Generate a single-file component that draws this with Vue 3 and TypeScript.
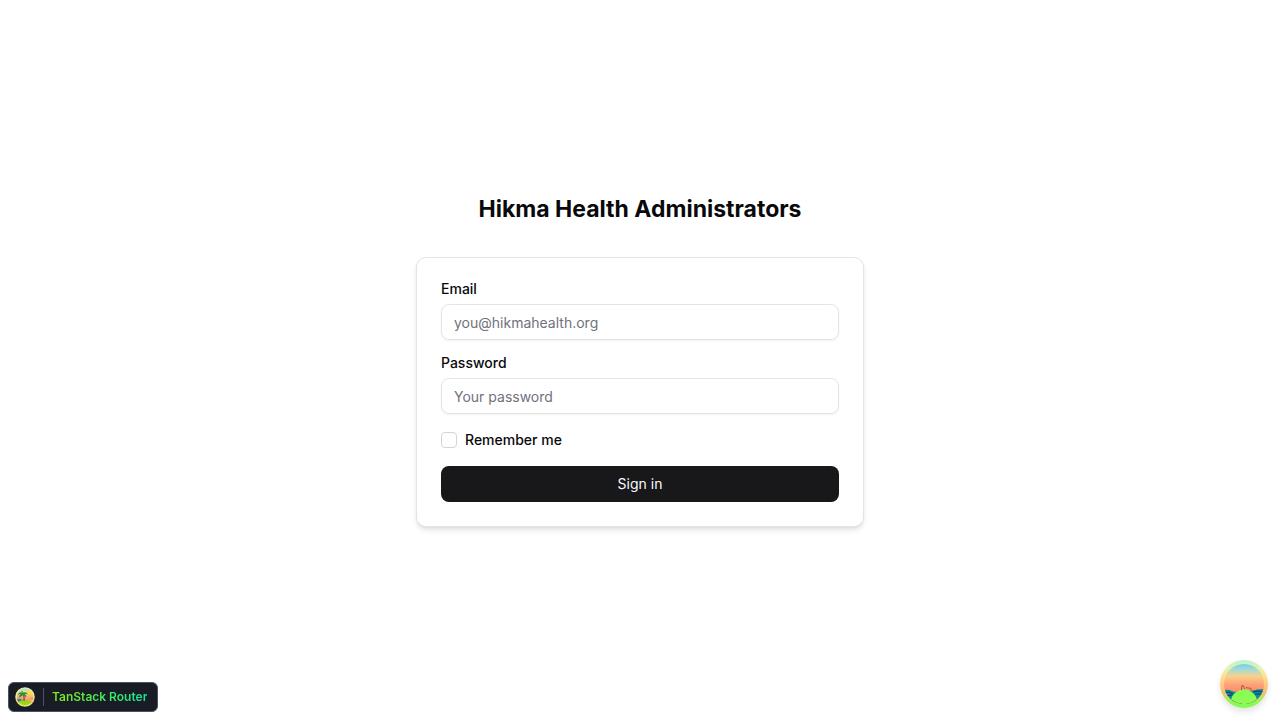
<script setup lang="ts">
import { ref } from 'vue'

const email = ref('')
const password = ref('')
const remember = ref(false)
</script>

<template>
  <main class="page">
    <div class="login">
      <h1>Hikma Health Administrators</h1>
      <form class="card" @submit.prevent>
        <div class="field">
          <label for="email">Email</label>
          <input id="email" v-model="email" type="email" placeholder="you@hikmahealth.org" />
        </div>
        <div class="field">
          <label for="password">Password</label>
          <input id="password" v-model="password" type="password" placeholder="Your password" />
        </div>
        <div class="remember">
          <input id="remember" v-model="remember" type="checkbox" />
          <label for="remember">Remember me</label>
        </div>
        <button class="submit" type="submit">Sign in</button>
      </form>
    </div>
  </main>

  <button class="router" type="button">
    <svg width="20" height="20" viewBox="0 0 40 40" aria-hidden="true">
      <defs>
        <linearGradient id="r-sky" x1="0" y1="0" x2="0" y2="1">
          <stop offset="0" stop-color="#8edbe0" />
          <stop offset=".25" stop-color="#f8d984" />
          <stop offset=".6" stop-color="#ff9c72" />
          <stop offset="1" stop-color="#f77e66" />
        </linearGradient>
        <linearGradient id="r-ring" x1="0" y1="0" x2="0" y2="1">
          <stop offset="0" stop-color="#c7f0c4" />
          <stop offset=".45" stop-color="#ffe99a" />
          <stop offset=".75" stop-color="#ffc37f" />
          <stop offset="1" stop-color="#d9ef72" />
        </linearGradient>
        <clipPath id="r-clip"><circle cx="20" cy="20" r="18" /></clipPath>
      </defs>
      <g clip-path="url(#r-clip)">
        <rect width="40" height="40" fill="url(#r-sky)" />
        <circle cx="29" cy="12" r="4" fill="#ffe323" />
        <path d="M0 25Q7 22 13 25T25 25T40 23V40H0Z" fill="#168b91" />
        <path d="M22 25Q31 21 40 25V30H24Z" fill="#f5a46d" />
        <ellipse cx="20" cy="35" rx="16" ry="9" fill="#9bd51a" />
        <path d="M15 14Q20 20 18 28" fill="none" stroke="#b85b38" stroke-width="3" />
        <path d="M16 12Q8 8 5 16Q8 14 11 15Q7 17 9 22Q13 18 16 16Q20 17 22 21Q24 17 20 14Q24 13 26 15Q24 9 17 11Q16 7 11 8Q14 9 16 12Z" fill="#259447" />
      </g>
      <circle cx="20" cy="20" r="18" fill="none" stroke="url(#r-ring)" stroke-width="3" />
    </svg>
    <span class="divider"></span>
    <span class="router-name">TanStack Router</span>
  </button>

  <button class="query" type="button" aria-label="Open query devtools">
    <svg width="48" height="48" viewBox="0 0 48 48" aria-hidden="true">
      <defs>
        <linearGradient id="q-sky" x1="0" y1="4" x2="0" y2="38" gradientUnits="userSpaceOnUse">
          <stop offset="0" stop-color="#70cfed" />
          <stop offset=".16" stop-color="#a3dbd3" />
          <stop offset=".36" stop-color="#f7d28a" />
          <stop offset=".62" stop-color="#ff9f76" />
          <stop offset="1" stop-color="#f97862" />
        </linearGradient>
        <linearGradient id="q-ring" x1="0" y1="0" x2="0" y2="1">
          <stop offset="0" stop-color="#b9f3cf" />
          <stop offset=".17" stop-color="#e4f2ae" />
          <stop offset=".35" stop-color="#ffe08c" />
          <stop offset=".56" stop-color="#ffc184" />
          <stop offset=".7" stop-color="#e8c670" />
          <stop offset=".84" stop-color="#a5ed61" />
          <stop offset="1" stop-color="#79ff50" />
        </linearGradient>
        <clipPath id="q-clip"><circle cx="24" cy="24" r="20" /></clipPath>
      </defs>
      <circle cx="24" cy="24" r="24" fill="url(#q-ring)" />
      <g clip-path="url(#q-clip)">
        <rect width="48" height="48" fill="url(#q-sky)" />
        <path d="M3 30Q8 29 12 31T19 31V42H3Z" fill="#078b9b" />
        <path d="M31 31Q37 29 45 29V42H31Z" fill="#078b9b" />
        <path d="M4 33L9 32L13 34M6 36L12 35M33 32L38 31L43 32M35 34L42 34" fill="none" stroke="#123c59" />
        <circle cx="24" cy="43" r="13.4" fill="#8bfc53" />
        <path d="M21.5 30Q21 27 22.5 25M22.5 25L25 29" fill="none" stroke="#8d5144" stroke-width=".9" />
        <path d="M26 27.5L31 28.5V31" fill="none" stroke="#a94e3e" stroke-width=".8" />
        <path d="M9 38Q16 44 22 44M27 44Q34 43 39 38" fill="none" stroke="#397537" stroke-width=".8" stroke-dasharray="3 1" />
      </g>
    </svg>
  </button>
</template>

<style>
body {
  margin: 0;
  background: #fff;
}
</style>

<style scoped>
.page,
.router,
.query {
  font-family: Inter, "Liberation Sans", sans-serif;
}
.page {
  min-height: 100vh;
  display: flex;
  align-items: center;
  justify-content: center;
  color: #09090b;
}
.page *,
.router,
.query {
  box-sizing: border-box;
}
.login {
  width: 100%;
  max-width: 448px;
  display: flex;
  flex-direction: column;
  gap: 32px;
}
h1 {
  margin: 0;
  text-align: center;
  font-size: 23px;
  line-height: 32px;
  font-weight: 700;
}
.card {
  display: flex;
  flex-direction: column;
  gap: 16px;
  padding: 24px;
  border: 1px solid #e4e4e7;
  border-radius: 10px;
  background: #fff;
  box-shadow: 0 4px 6px -1px rgb(0 0 0 / 10%), 0 2px 4px -2px rgb(0 0 0 / 10%);
}
.field {
  display: flex;
  flex-direction: column;
  gap: 8px;
}
label {
  font-size: 14px;
  line-height: 14px;
  font-weight: 500;
}
.field input {
  width: 100%;
  height: 36px;
  margin: 0;
  padding: 4px 12px;
  border: 1px solid #e4e4e7;
  border-radius: 8px;
  background: transparent;
  color: inherit;
  font: 400 14px/20px Inter, "Liberation Sans", sans-serif;
  box-shadow: 0 1px 2px rgb(0 0 0 / 5%);
}
.field input::placeholder {
  color: #71717b;
  opacity: 1;
}
.remember {
  height: 20px;
  display: flex;
  align-items: center;
  gap: 8px;
}
.remember input {
  appearance: none;
  width: 16px;
  height: 16px;
  margin: 0;
  border: 1px solid #d1d5dc;
  border-radius: 4px;
  background: #fff;
}
.remember input:checked {
  background: #18181b;
}
.submit {
  height: 36px;
  padding: 8px 16px;
  border: 0;
  border-radius: 8px;
  background: #18181b;
  color: #fafafa;
  font: 400 14px/20px Inter, "Liberation Sans", sans-serif;
  cursor: pointer;
}
.router {
  position: fixed;
  left: 8px;
  bottom: 8px;
  height: 30px;
  display: flex;
  align-items: center;
  gap: 8px;
  padding: 4px 10px 4px 6px;
  border: 1px solid #475467;
  border-radius: 6px;
  background: #191c24;
  cursor: pointer;
}
.divider {
  width: 1px;
  height: 18px;
  background: #475467;
}
.router-name {
  font-size: 12px;
  line-height: 16px;
  font-weight: 600;
  background: linear-gradient(to right, #84eb22, #10e995);
  background-clip: text;
  color: transparent;
}
.query {
  position: fixed;
  right: 12px;
  bottom: 12px;
  width: 48px;
  height: 48px;
  padding: 0;
  border: 0;
  border-radius: 50%;
  background: transparent;
  box-shadow: 0 4px 6px rgb(0 0 0 / 10%);
  cursor: pointer;
}
.query svg,
.router svg {
  display: block;
}
</style>
